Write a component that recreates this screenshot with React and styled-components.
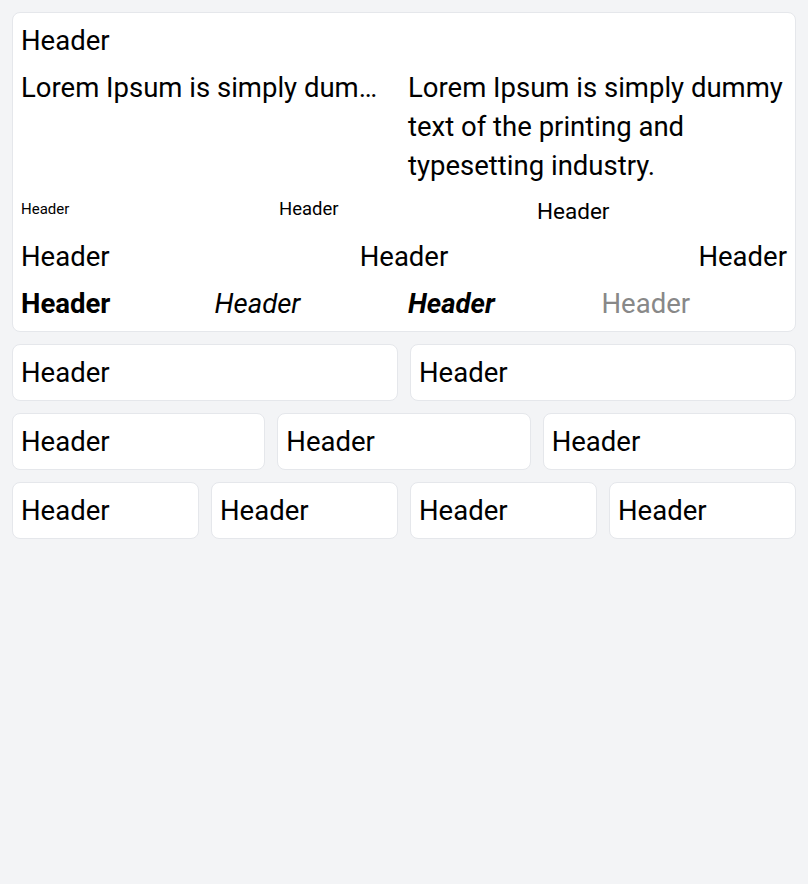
import React from "react";
import styled, { createGlobalStyle } from "styled-components";

const Global = createGlobalStyle`
  html, body { margin: 0; padding: 0; background: #f3f4f6; }
  body { font-family: Roboto, "Noto Sans", sans-serif; color: #000; }
`;

const Page = styled.div`
  padding: 12px;
  display: flex;
  flex-direction: column;
  gap: 12px;
`;

const Card = styled.div`
  background: #fff;
  border: 1px solid #e5e7eb;
  border-radius: 8px;
  padding: 8px;
  display: flex;
  flex-direction: column;
  gap: 8px;
  min-width: 0;
`;

const Grid = styled.div`
  display: grid;
  grid-template-columns: repeat(${(p) => p.$cols}, minmax(0, 1fr));
  gap: ${(p) => p.$gap || 8}px;
  align-items: ${(p) => p.$align || "start"};
`;

const Text = styled.div`
  font-size: ${(p) => p.$size || 27.5}px;
  line-height: ${(p) => p.$lh || 39}px;
  font-weight: ${(p) => (p.$bold ? 700 : 400)};
  font-style: ${(p) => (p.$italic ? "italic" : "normal")};
  color: ${(p) => p.$color || "#000"};
  text-align: ${(p) => p.$align || "left"};
  min-width: 0;
`;

const Ellipsis = styled(Text)`
  white-space: nowrap;
  overflow: hidden;
  text-overflow: ellipsis;
`;

const lorem = "Lorem Ipsum is simply dummy text of the printing and typesetting industry.";

export default function App() {
  return (
    <>
      <Global />
      <Page>
        <Card>
          <Text>Header</Text>
          <Grid $cols={2}>
            <Ellipsis>{lorem}</Ellipsis>
            <Text>{lorem}</Text>
          </Grid>
          <Grid $cols={3}>
            <Text $size={15} $lh={33}>Header</Text>
            <Text $size={18.5} $lh={33}>Header</Text>
            <Text $size={22.5} $lh={36}>Header</Text>
          </Grid>
          <Grid $cols={3}>
            <Text>Header</Text>
            <Text $align="center">Header</Text>
            <Text $align="right">Header</Text>
          </Grid>
          <Grid $cols={4}>
            <Text $bold>Header</Text>
            <Text $italic>Header</Text>
            <Text $bold $italic>Header</Text>
            <Text $color="#888888">Header</Text>
          </Grid>
        </Card>
        <Grid $cols={2} $gap={12}>
          <Card><Text>Header</Text></Card>
          <Card><Text>Header</Text></Card>
        </Grid>
        <Grid $cols={3} $gap={12}>
          <Card><Text>Header</Text></Card>
          <Card><Text>Header</Text></Card>
          <Card><Text>Header</Text></Card>
        </Grid>
        <Grid $cols={4} $gap={12}>
          <Card><Text>Header</Text></Card>
          <Card><Text>Header</Text></Card>
          <Card><Text>Header</Text></Card>
          <Card><Text>Header</Text></Card>
        </Grid>
      </Page>
    </>
  );
}
